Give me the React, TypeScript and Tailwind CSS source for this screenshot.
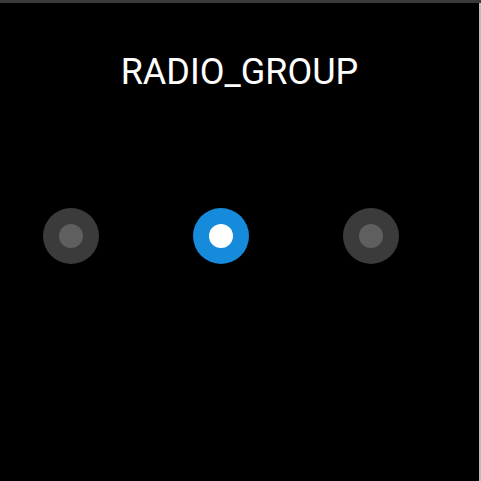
const Radio = ({ checked }: { checked?: boolean }) => (
  <div
    className={`flex h-14 w-14 items-center justify-center rounded-full ${
      checked ? "bg-[#168bdb]" : "bg-[#3b3b3b]"
    }`}
  >
    <div className={`h-6 w-6 rounded-full ${checked ? "bg-white" : "bg-[#5f5f5f]"}`} />
  </div>
);

export default function App() {
  return (
    <div className="flex h-[481px] w-[481px] flex-col bg-black">
      <div className="h-[3px] w-full bg-[#3a3a3a]" />
      <div className="flex flex-1">
        <div className="flex flex-1 flex-col">
          <h1
            className="mt-[49px] text-center text-[36px] leading-[40px] text-white"
            style={{ fontFamily: "Roboto, sans-serif" }}
          >
            RADIO_GROUP
          </h1>
          <div className="mt-[116px] flex gap-[94px] pl-[43px]">
            <Radio />
            <Radio checked />
            <Radio />
          </div>
        </div>
        <div className="w-[2px] bg-[#bdbdbd]" />
      </div>
    </div>
  );
}
